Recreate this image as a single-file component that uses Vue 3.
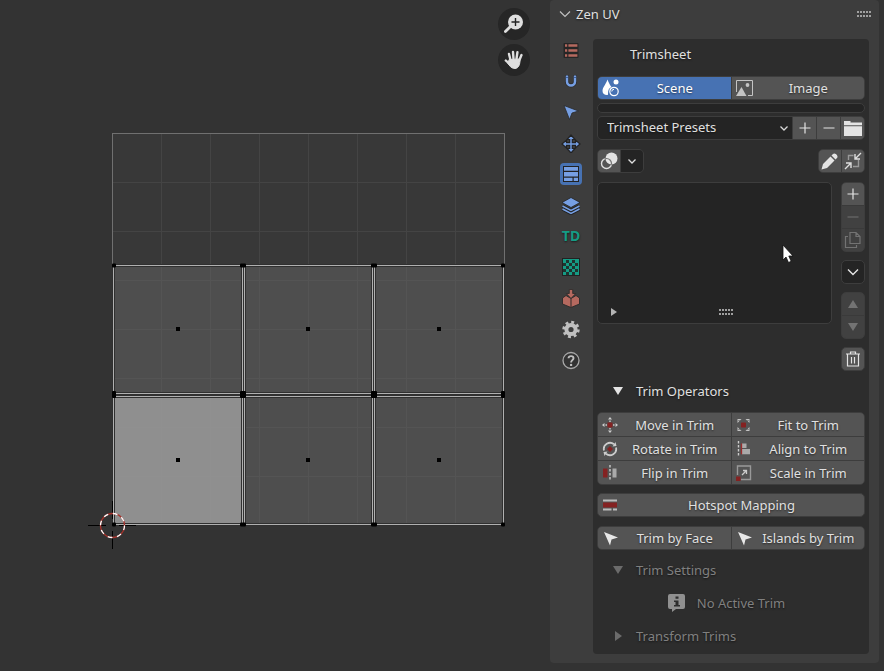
<script setup>
import { ref } from 'vue'

const preset = ref('Trimsheet Presets')
const query = ref('')
const activeTab = ref('trimsheet')

const tabs = [
  { id: 'presets', label: 'Presets' },
  { id: 'snap', label: 'Snapping' },
  { id: 'select', label: 'Select' },
  { id: 'transform', label: 'Transform' },
  { id: 'trimsheet', label: 'Trimsheet' },
  { id: 'stack', label: 'Stack' },
  { id: 'density', label: 'Texel Density' },
  { id: 'checker', label: 'Checker' },
  { id: 'pack', label: 'Pack' },
  { id: 'settings', label: 'Settings' },
  { id: 'help', label: 'Help' },
]

const operators = [
  { id: 'move', label: 'Move in Trim' },
  { id: 'fit', label: 'Fit to Trim' },
  { id: 'rotate', label: 'Rotate in Trim' },
  { id: 'align', label: 'Align to Trim' },
  { id: 'flip', label: 'Flip in Trim' },
  { id: 'scale', label: 'Scale in Trim' },
]

const gridX = [161, 210, 259, 308, 357, 406, 455]
const gridY = [182, 231, 280, 329, 378, 427, 476]
const columns = [
  { x: 113.5, w: 129, c: 178 },
  { x: 244.5, w: 128, c: 308 },
  { x: 374.5, w: 129, c: 439 },
]
const rows = [
  { y: 265.5, h: 128, c: 329 },
  { y: 396.5, h: 128, c: 460 },
]
const faces = rows.flatMap((r, ri) =>
  columns.map((c, ci) => ({ ...c, y: r.y, h: r.h, cy: r.c, active: ri === 1 && ci === 0 })),
)
const vertices = [
  { y: 265, h: 4 },
  { y: 394, h: 7 },
  { y: 524, h: 4 },
].flatMap((r) => [
  { x: 114, w: 4, ...r },
  { x: 243, w: 6, ...r },
  { x: 374, w: 6, ...r },
  { x: 503, w: 4, ...r },
])

const checker = [
  [5, 3], [11, 3], [8, 6], [14, 6], [5, 9], [11, 9], [2, 6], [2, 12], [8, 12], [14, 12], [5, 15], [11, 15],
]
</script>

<template>
  <div class="editor">
    <main class="viewport">
      <svg class="canvas" viewBox="0 0 550 671" preserveAspectRatio="xMinYMin meet" role="img" aria-label="UV canvas">
        <rect x="112.5" y="133.5" width="392" height="391" fill="#383838" />
        <g stroke="#444444">
          <line v-for="y in gridY" :key="'h' + y" x1="113" x2="504" :y1="y + 0.5" :y2="y + 0.5" />
          <line v-for="x in gridX" :key="'v' + x" y1="134" y2="524" :x1="x + 0.5" :x2="x + 0.5" />
        </g>
        <rect x="112.5" y="133.5" width="392" height="391" fill="none" stroke="#707070" />
        <g v-for="f in faces" :key="f.x + '-' + f.y">
          <rect :x="f.x" :y="f.y" :width="f.w" :height="f.h" :fill="f.active ? '#999999' : '#666666'" :fill-opacity="f.active ? 0.9 : 0.48" stroke="#303030" stroke-width="3" />
          <rect :x="f.x" :y="f.y" :width="f.w" :height="f.h" fill="none" stroke="#b0b0b0" />
          <rect :x="f.c - 2" :y="f.cy - 2" width="4" height="4" fill="#000" />
        </g>
        <rect v-for="v in vertices" :key="v.x + '-' + v.y" :x="v.x - v.w / 2" :y="v.y - v.h / 2 + 0.5" :width="v.w" :height="v.h" rx="1" fill="#000" />
        <g fill="none">
          <path d="M88 525.5h18M119 525.5h17M112.5 501v18M112.5 531v18" stroke="#000" />
          <circle cx="112.5" cy="525.5" r="12" stroke="#a8322b" stroke-width="1.3" />
          <circle cx="112.5" cy="525.5" r="12" stroke="#fff" stroke-width="1.3" stroke-dasharray="4.71 4.71" />
        </g>
      </svg>
      <div class="gizmos">
        <button class="gizmo" aria-label="Zoom view">
          <svg width="20" height="20" viewBox="0 0 20 20">
            <path d="M6.500 12.500L1.400 17.600" stroke="#dedede" stroke-width="2.800" stroke-linecap="round" />
            <circle cx="11.500" cy="8" r="7.500" fill="#dedede" />
            <path d="M11.500 4v8M7.500 8h8" stroke="#222" stroke-width="1.400" />
          </svg>
        </button>
        <button class="gizmo" aria-label="Move view">
          <svg width="20" height="20" viewBox="0 0 20 20" fill="none" stroke="#dedede" stroke-width="2.400" stroke-linecap="round">
            <path d="M6.500 10L5 4M9.500 9L9 2M12.500 9L13.400 2.300M15 11L17.500 5M6 14.500L1.800 10.500" />
            <path d="M5.500 9.500L15.800 9C16.500 14 14.500 18.500 11 18.500C7 18.500 5.500 15.500 4 13.500Z" fill="#dedede" stroke-width="1" />
          </svg>
        </button>
      </div>
    </main>

    <aside class="panel">
      <header class="panel-head">
        <button class="collapse">
          <svg width="12" height="12" viewBox="0 0 12 12" fill="none" stroke="#c0c0c0" stroke-width="1.200"><path d="M1 3.500l5 5 5-5" /></svg>
          <span>Zen UV</span>
        </button>
        <span class="grip"></span>
      </header>

      <div class="panel-body">
        <nav class="tabs" aria-label="Zen UV sections">
          <button v-for="t in tabs" :key="t.id" class="tab" :class="{ active: t.id === activeTab }" :aria-label="t.label" @click="activeTab = t.id">
            <span v-if="t.id === 'density'" class="density">TD</span>
            <svg v-else width="20" height="20" viewBox="0 0 20 20">
              <template v-if="t.id === 'presets'">
                <rect x="2.500" y="3" width="15" height="15" rx="1" fill="#262626" />
                <path d="M4 5.500h2.200M7.400 5.500h9M4 10.500h2.200M7.400 10.500h9M4 15.500h2.200M7.400 15.500h9" stroke="#b5695f" stroke-width="2.600" />
              </template>
              <template v-else-if="t.id === 'snap'">
                <path d="M6 4v6.500a4 4 0 0 0 8 0V4" fill="none" stroke="#2a2a2a" stroke-width="4" />
                <path d="M6 4.500v6a4 4 0 0 0 8 0v-6" fill="none" stroke="#769fe3" stroke-width="2.500" />
                <path d="M4.800 6.500h2.400M12.800 6.500h2.400" stroke="#33508a" stroke-width=".8" />
              </template>
              <path v-else-if="t.id === 'select'" d="M3 3.500L17.500 9l-6.500 2-2.500 6.500z" fill="#769fe3" stroke="#2a2a2a" stroke-width=".8" />
              <template v-else-if="t.id === 'transform'">
                <path d="M10 2l4 4.500h-2.700v3.200h3.200V7L19 11l-4.500 4v-2.700h-3.200v3.200H14L10 20l-4-4.500h2.700v-3.200H5.500V15L1 11l4.500-4v2.700h3.200V6.500H6z" fill="#769fe3" stroke="#222" stroke-width="1.200" />
              </template>
              <template v-else-if="t.id === 'trimsheet'">
                <rect x="2" y="2" width="16" height="16" fill="#222" />
                <path d="M3 3h14v3.800H3zM3 8h14v4.500H3zM3 13.700h8.500V17H3zM12.700 13.700H17V17h-4.300z" fill="#769fe3" />
              </template>
              <template v-else-if="t.id === 'stack'">
                <path d="M1.500 14L10 18.500 18.500 14M1.500 11L10 15.500 18.500 11" fill="none" stroke="#222" stroke-width="3.400" />
                <path d="M1.500 14L10 18.500 18.500 14M1.500 11L10 15.500 18.500 11" fill="none" stroke="#769fe3" stroke-width="1.500" />
                <path d="M10 2.500L19 7.500l-9 5-9-5z" fill="#769fe3" stroke="#222" stroke-width=".8" />
              </template>
              <template v-else-if="t.id === 'checker'">
                <rect x="1.500" y="1.500" width="17" height="17" fill="#159c85" stroke="#222" />
                <rect v-for="(c, i) in checker" :key="i" :x="c[0]" :y="c[1]" width="3" height="3" fill="#20332f" />
              </template>
              <template v-else-if="t.id === 'pack'">
                <path d="M1.500 10l3.500-2.500 5 3 5-3 3.500 2.500v6L10 19.500 1.500 16z" fill="#b5695f" stroke="#2a2a2a" stroke-width=".9" />
                <path d="M8.300 1.500h3.400v4h3L10 10.500 5.300 5.500h3z" fill="#b5695f" stroke="#2a2a2a" stroke-width=".8" />
                <path d="M10 11v8" stroke="#2a2a2a" />
              </template>
              <template v-else-if="t.id === 'settings'">
                <circle cx="10" cy="10.500" r="7.300" fill="none" stroke="#c0c0c0" stroke-width="2.800" stroke-dasharray="2.870 2.860" />
                <circle cx="10" cy="10.500" r="4.600" fill="none" stroke="#c0c0c0" stroke-width="4" />
              </template>
              <template v-else>
                <circle cx="10" cy="10.500" r="8" fill="#333" stroke="#a8a8a8" stroke-width="1.300" />
                <path d="M7.500 8.300c.2-3 5-2.900 5-.1 0 1.900-2.400 2-2.400 4.300" fill="none" stroke="#c0c0c0" stroke-width="1.900" />
                <circle cx="10.100" cy="14.900" r="1.200" fill="#c0c0c0" />
              </template>
            </svg>
          </button>
        </nav>

        <section class="box">
          <h2 class="title">Trimsheet</h2>

          <div class="pair">
            <button class="btn selected">
              <span class="icon">
                <svg width="20" height="20" viewBox="0 0 20 20">
                  <path d="M7.500 1.500C6 6 2.500 9.500 2.500 13c0 2.500 2 4 4.500 4 1 0 1-.5 1-1.500C8 12 9 10 11.500 9 9.500 6.500 8.500 4 7.500 1.500z" fill="#fff" />
                  <circle cx="16" cy="4" r="2.500" fill="#fff" />
                  <circle cx="14" cy="13.500" r="4.200" fill="none" stroke="#fff" stroke-width="1.200" />
                  <path d="M11.800 13.500a2.200 2.200 0 0 1 2.200-2.200" fill="none" stroke="#fff" />
                </svg>
              </span>
              <span class="label">Scene</span>
            </button>
            <button class="btn">
              <span class="icon">
                <svg width="20" height="20" viewBox="0 0 20 20">
                  <path d="M2.500 14V2.500h16v15H14" fill="none" stroke="#c4c4c4" />
                  <path d="M2 18L7.500 9l5 9z" fill="#c4c4c4" />
                  <circle cx="13.500" cy="7" r="1.900" fill="#c4c4c4" />
                </svg>
              </span>
              <span class="label">Image</span>
            </button>
          </div>

          <input v-model="query" class="search" type="text" aria-label="Trimsheet data" />

          <div class="presets">
            <div class="select">
              <select v-model="preset" aria-label="Trimsheet Presets">
                <option>Trimsheet Presets</option>
              </select>
              <svg width="10" height="10" viewBox="0 0 10 10" fill="none" stroke="#d8d8d8" stroke-width="1.300"><path d="M1.500 3.500L5 7l3.500-3.500" /></svg>
            </div>
            <button class="btn square" aria-label="Add preset">
              <svg width="12" height="12" viewBox="0 0 12 12" stroke="#e4e4e4" stroke-width="1.200"><path d="M6 .5v11M.5 6h11" /></svg>
            </button>
            <button class="btn square" aria-label="Remove preset">
              <svg width="12" height="12" viewBox="0 0 12 12" stroke="#e4e4e4" stroke-width="1.200"><path d="M.5 6h11" /></svg>
            </button>
            <button class="btn square" aria-label="Open preset folder">
              <svg width="18" height="16" viewBox="0 0 18 16" fill="#e4e4e4"><path d="M0 1h6.500v1.500H18v2.800H0zM0 6.300h18V16H0z" /></svg>
            </button>
          </div>

          <div class="toggles">
            <div class="group">
              <button class="btn square" aria-label="Show overlays">
                <svg width="20" height="20" viewBox="0 0 20 20">
                  <defs>
                    <clipPath id="overlay-disc"><circle cx="12.500" cy="7.500" r="6" /></clipPath>
                  </defs>
                  <circle cx="7.500" cy="12.500" r="5" fill="none" stroke="#dedede" stroke-width="1.400" />
                  <circle cx="12.500" cy="7.500" r="6.800" fill="#545454" />
                  <circle cx="12.500" cy="7.500" r="6" fill="#e4e4e4" />
                  <circle cx="7.500" cy="12.500" r="5" fill="none" stroke="#777" stroke-width="1.200" clip-path="url(#overlay-disc)" />
                </svg>
              </button>
              <button class="btn square dark" aria-label="Overlay options">
                <svg width="10" height="10" viewBox="0 0 10 10" fill="none" stroke="#e0e0e0" stroke-width="1.300"><path d="M1.500 3.500L5 7l3.500-3.500" /></svg>
              </button>
            </div>
            <div class="group">
              <button class="btn square" aria-label="Edit trims">
                <svg width="20" height="20" viewBox="0 0 20 20" fill="#e4e4e4"><path d="M1.500 18.500L3 13 10.500 5.500l4 4L7 17zM11.500 4.500L13 3c2-2 6 2 4 4l-1.500 1.500z" /></svg>
              </button>
              <button class="btn square" aria-label="Fit view">
                <svg width="20" height="20" viewBox="0 0 20 20" fill="none" stroke="#dedede" stroke-width="1.400">
                  <path d="M5.500 9V4.500h5M10 15.500h5.500V9" stroke="#999" />
                  <path d="M18 2l-6 6M12 3v5h5M2 18l6-6M3 12h5v5" />
                </svg>
              </button>
            </div>
          </div>

          <div class="workspace">
            <div class="list" role="listbox" aria-label="Trims">
              <div class="list-foot">
                <svg width="8" height="8" viewBox="0 0 8 8" fill="#b4b4b4"><path d="M1 0l6 4-6 4z" /></svg>
                <span class="grip"></span>
              </div>
              <svg class="pointer" width="12" height="20" viewBox="0 0 12 20"><path d="M1 1v15l3-3 2.500 5.500 2.700-1.200L6.800 12H11z" fill="#fff" stroke="#111" stroke-width=".8" /></svg>
            </div>
            <div class="side">
              <div class="stack">
                <button class="btn square" aria-label="Add trim">
                  <svg width="12" height="12" viewBox="0 0 12 12" stroke="#e4e4e4" stroke-width="1.200"><path d="M6 .5v11M.5 6h11" /></svg>
                </button>
                <button class="btn square off" disabled aria-label="Remove trim">
                  <svg width="12" height="12" viewBox="0 0 12 12" stroke="#737373" stroke-width="1.200"><path d="M.5 6h11" /></svg>
                </button>
                <button class="btn square off" disabled aria-label="Duplicate trim">
                  <svg width="18" height="18" viewBox="0 0 18 18" fill="none" stroke="#737373" stroke-width="1.200"><path d="M6 1.500h6l4 4v7H6zM12 1.500v4h4M4 5.500H1.500v11h11V14" /></svg>
                </button>
              </div>
              <button class="btn square dark single" aria-label="Trim menu">
                <svg width="12" height="12" viewBox="0 0 12 12" fill="none" stroke="#e4e4e4" stroke-width="1.400"><path d="M1 3.500l5 5 5-5" /></svg>
              </button>
              <div class="stack">
                <button class="btn square off" disabled aria-label="Move up">
                  <svg width="10" height="8" viewBox="0 0 10 8" fill="#737373"><path d="M0 8l5-8 5 8z" /></svg>
                </button>
                <button class="btn square off" disabled aria-label="Move down">
                  <svg width="10" height="8" viewBox="0 0 10 8" fill="#737373"><path d="M0 0h10L5 8z" /></svg>
                </button>
              </div>
              <button class="btn square single" aria-label="Delete all">
                <svg width="14" height="16" viewBox="0 0 14 16" fill="none" stroke="#e4e4e4" stroke-width="1.200"><path d="M0 3h14M4.500 3V1h5v2M1.500 3v12h11V3M5.500 6v6.500M8.500 6v6.500" /></svg>
              </button>
            </div>
          </div>

          <button class="fold operators-fold">
            <svg width="10" height="8" viewBox="0 0 10 8" fill="#e4e4e4"><path d="M0 0h10L5 8z" /></svg>
            <span>Trim Operators</span>
          </button>

          <div class="pair operators">
            <button v-for="o in operators" :key="o.id" class="btn">
              <span class="icon">
                <svg width="16" height="16" viewBox="0 0 16 16">
                  <template v-if="o.id === 'move'">
                    <rect x="5.500" y="5.500" width="5" height="5" fill="#842222" />
                    <path d="M8 0l2 2.500H6zM8 16l2-2.500H6zM0 8l2.500-2v4zM16 8l-2.500-2v4zM7.300 3.500h1.400V5H7.300zM7.300 11h1.400v1.500H7.300zM3.500 7.300H5v1.400H3.500zM11 7.300h1.500v1.400H11z" fill="#ccc" />
                  </template>
                  <template v-else-if="o.id === 'fit'">
                    <rect x="5" y="5.500" width="5" height="5" fill="#842222" />
                    <path d="M1.500 2h4l-4 4zM13.500 2v4l-4-4zM13.500 14h-4l4-4zM1.500 14v-4l4 4z" fill="#c4c4c4" />
                    <path d="M2.500 3l2.500 2.500M12.500 3L10 5.500M12.500 13L10 10.500M2.500 13L5 10.500" stroke="#545454" />
                  </template>
                  <template v-else-if="o.id === 'rotate'">
                    <path d="M8 5l3 3-3 3-3-3z" fill="#842222" />
                    <path d="M2 9.500a6.200 6.200 0 0 1 10-6.200M14 6.500a6.200 6.200 0 0 1-10 6.200" fill="none" stroke="#ccc" stroke-width="1.800" />
                    <path d="M10.500 5.500l4-.5-1-4zM5.500 10.500l-4 .5 1 4z" fill="#ccc" />
                  </template>
                  <template v-else-if="o.id === 'align'">
                    <path d="M2.500 0v16" stroke="#ccc" stroke-width="1.400" stroke-dasharray="2.500 1.500" />
                    <path d="M6 2.500h4.500v4.700H14v6H6z" fill="#aaa" />
                    <path d="M6 7.500h8" stroke="#545454" />
                    <path d="M5.500 2.500v10.700" stroke="#9a2c2c" stroke-width="1.300" />
                  </template>
                  <template v-else-if="o.id === 'flip'">
                    <rect x="1" y="3.500" width="4.500" height="9" fill="#842222" />
                    <path d="M8 0v16" stroke="#ccc" stroke-width="1.400" stroke-dasharray="2.500 1.500" />
                    <rect x="10.500" y="3.500" width="4" height="9" fill="#aaa" />
                  </template>
                  <template v-else>
                    <path d="M1.500 10V1h13v13.500H5" fill="none" stroke="#999" stroke-width="1.400" />
                    <path d="M6 10l4-4M7 5.500h3.500V9" fill="none" stroke="#ccc" stroke-width="1.300" />
                    <rect x="0" y="11.500" width="4.500" height="4.500" fill="#842222" />
                  </template>
                </svg>
              </span>
              <span class="label">{{ o.label }}</span>
            </button>
          </div>

          <button class="btn single wide">
            <span class="icon">
              <svg width="16" height="12" viewBox="0 0 16 12"><path d="M1 1.500h14M1 10.500h8.500M11 10.500h4" stroke="#bbb" stroke-width="2" /><rect x="1" y="3.500" width="14" height="5" fill="#842222" /></svg>
            </span>
            <span class="label">Hotspot Mapping</span>
          </button>

          <div class="pair">
            <button v-for="name in ['Trim by Face', 'Islands by Trim']" :key="name" class="btn">
              <span class="icon">
                <svg width="16" height="16" viewBox="0 0 16 16"><path d="M2 2l14 5.500-6.500 2L8 15.500z" fill="#e8e8e8" /></svg>
              </span>
              <span class="label">{{ name }}</span>
            </button>
          </div>

          <div class="settings">
            <button class="fold muted">
              <svg width="10" height="8" viewBox="0 0 10 8" fill="#6b6b6b"><path d="M0 0h10L5 8z" /></svg>
              <span>Trim Settings</span>
            </button>
            <p class="notice">
              <svg width="18" height="18" viewBox="0 0 18 18">
                <path d="M2 0h13a2 2 0 0 1 2 2v11a2 2 0 0 1-2 2H8l-4 3v-3H2a2 2 0 0 1-2-2V2a2 2 0 0 1 2-2z" fill="#909090" />
                <path d="M7.500 2.500h3v2.200h-3zM6 6.500h4.500V11H12v1.500H6V11h1.500V8H6z" fill="#2d2d2d" />
              </svg>
              <span>No Active Trim</span>
            </p>
            <button class="fold muted">
              <svg width="10" height="10" viewBox="0 0 10 10" fill="#6b6b6b"><path d="M2 0l7 5-7 5z" /></svg>
              <span>Transform Trims</span>
            </button>
          </div>
        </section>
      </div>
    </aside>
  </div>
</template>

<style>
body {
  margin: 0;
  background: #333333;
}
</style>

<style scoped>
* {
  box-sizing: border-box;
}
.editor {
  display: flex;
  align-items: flex-start;
  min-height: 100vh;
  background: #333333;
  color: #e0e0e0;
  font: 13px/20px "Noto Sans", "DejaVu Sans", sans-serif;
  text-shadow: 0 1px 2px rgba(0, 0, 0, 0.55);
}
button,
input,
select {
  margin: 0;
  padding: 0;
  border: 0;
  border-radius: 0;
  background: none;
  color: inherit;
  font: inherit;
  text-shadow: inherit;
}
svg {
  display: block;
  flex: none;
}
.viewport {
  position: relative;
  flex: 1;
  min-width: 0;
}
.canvas {
  width: 100%;
}
.gizmos {
  position: absolute;
  top: 8px;
  right: 20px;
  display: grid;
  gap: 4px;
}
.gizmo {
  display: grid;
  place-items: center;
  width: 32px;
  height: 32px;
  border-radius: 50%;
  background: #262626;
}
.panel {
  width: 329px;
  margin-right: 5px;
  padding-bottom: 9px;
  border-radius: 4px;
  background: #3d3d3d;
}
.panel-head {
  display: flex;
  align-items: center;
  justify-content: space-between;
  height: 28px;
  padding: 0 7px 0 9px;
}
.collapse {
  display: flex;
  align-items: center;
  gap: 5px;
}
.grip {
  width: 15px;
  height: 6px;
  background: repeating-linear-gradient(90deg, #a0a0a0 0 2px, transparent 2px 3px);
  -webkit-mask: linear-gradient(#000 0 2px, transparent 2px 4px, #000 4px);
  mask: linear-gradient(#000 0 2px, transparent 2px 4px, #000 4px);
}
.panel-body {
  display: flex;
  padding: 11px 10px 0 0;
}
.tabs {
  display: flex;
  flex-direction: column;
  align-items: center;
  gap: 9px;
  width: 43px;
  padding-right: 1px;
}
.tab {
  display: grid;
  place-items: center;
  width: 22px;
  height: 22px;
  border-radius: 4px;
}
.tab.active {
  background: #4772b3;
}
.density {
  color: #159c85;
  font: bold 14px/20px "Noto Sans", sans-serif;
}
.box {
  flex: 1;
  min-width: 0;
  padding: 3px 4px 6px;
  border-radius: 4px;
  background: #2d2d2d;
}
.title {
  margin: 0 0 10px;
  padding-left: 33px;
  font-size: 13px;
  font-weight: 400;
  line-height: 24px;
}
.btn {
  display: flex;
  align-items: center;
  height: 24px;
  background: #545454;
}
.icon {
  display: grid;
  place-items: center;
  width: 24px;
}
.label {
  flex: 1;
  padding-right: 3px;
  text-align: center;
  white-space: nowrap;
}
.pair {
  display: grid;
  grid-template-columns: 1fr 1fr;
  gap: 1px;
  overflow: hidden;
  border: 1px solid #3d3d3d;
  border-radius: 5px;
  background: #3d3d3d;
}
.pair .btn {
  height: 22px;
}
.pair.operators .btn {
  height: 23px;
}
.pair .selected {
  background: #4772b3;
  color: #ffffff;
}
.search {
  display: block;
  width: 100%;
  height: 10px;
  margin: 3px 0;
  border: 1px solid #3d3d3d;
  border-radius: 5px;
  background: #242424;
}
.presets {
  display: flex;
  gap: 1px;
  overflow: hidden;
  border: 1px solid #3d3d3d;
  border-radius: 5px;
  background: #3d3d3d;
}
.square {
  justify-content: center;
  width: 24px;
}
.presets .square {
  width: 23px;
  height: 22px;
}
.select {
  display: flex;
  flex: 1;
  align-items: center;
  padding-right: 3px;
  background: #242424;
}
.select select {
  flex: 1;
  height: 22px;
  padding: 0 0 2px 9px;
  appearance: none;
  outline: 0;
}
.toggles {
  display: flex;
  justify-content: space-between;
  margin: 9px 0;
}
.group {
  display: flex;
  gap: 1px;
  overflow: hidden;
  border: 1px solid #3d3d3d;
  border-radius: 5px;
  background: #3d3d3d;
}
.group .square {
  width: 22px;
  height: 22px;
}
.dark,
.group .dark {
  background: #242424;
}
.workspace {
  display: flex;
  align-items: flex-start;
  gap: 9px;
}
.list {
  position: relative;
  display: flex;
  flex: 1;
  flex-direction: column;
  justify-content: flex-end;
  height: 142px;
  border: 1px solid #3d3d3d;
  border-radius: 5px;
  background: #242424;
}
.list-foot {
  display: flex;
  align-items: center;
  gap: 101px;
  padding: 0 0 7px 12px;
}
.pointer {
  position: absolute;
  top: 61px;
  left: 184px;
}
.side {
  display: flex;
  flex-direction: column;
  gap: 8px;
}
.stack {
  display: grid;
  gap: 1px;
  overflow: hidden;
  border: 1px solid #3d3d3d;
  border-radius: 5px;
  background: #3a3a3a;
}
.stack .square {
  width: 22px;
  height: 22px;
}
.off {
  background: #414141;
}
.single {
  border: 1px solid #3d3d3d;
  border-radius: 5px;
}
.wide {
  width: 100%;
  margin: 8px 0 9px;
}
.fold {
  display: flex;
  align-items: center;
  gap: 13px;
  height: 24px;
  padding-left: 16px;
}
.operators-fold {
  margin: 8px 0 9px;
}
.muted,
.notice {
  color: #808080;
}
.settings {
  display: grid;
  gap: 9px;
  padding-top: 8px;
}
.notice {
  display: flex;
  align-items: center;
  justify-content: center;
  gap: 11px;
  height: 24px;
  margin: 0;
  padding-right: 9px;
}
</style>
